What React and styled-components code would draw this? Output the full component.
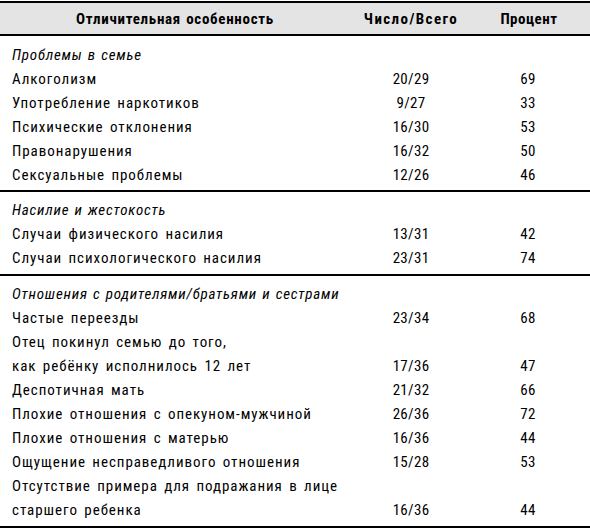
import React from "react";
import styled, { createGlobalStyle } from "styled-components";

const Global = createGlobalStyle`
  html, body { margin: 0; padding: 0; background: #fff; }
  body {
    font-family: Roboto, "Liberation Sans", Arial, sans-serif;
    font-stretch: 80%;
    color: #000;
  }
`;

const Table = styled.div`
  width: 590px;
  margin-top: 1px;
  border-top: 2px solid #000;
  font-size: 15px;
`;

const Header = styled.div`
  display: grid;
  grid-template-columns: 350px 122px 1fr;
  align-items: center;
  height: 31px;
  background: #e4e4e4;
  border-bottom: 2px solid #000;
  font-weight: bold;
`;

const HeadCell = styled.div`
  text-align: center;
  letter-spacing: ${(p) => p.$ls}px;
  word-spacing: 1px;
  padding-right: ${(p) => p.$shift || 0}px;
`;

const Section = styled.div`
  padding: ${(p) => (p.$first ? "7px 0 3px" : "6px 0 4px")};
  border-bottom: 2px solid #000;
`;

const Title = styled.div`
  padding-left: 12px;
  line-height: 24px;
  font-style: italic;
  white-space: nowrap;
  letter-spacing: 0.8px;
  word-spacing: 1px;
`;

const Row = styled.div`
  display: grid;
  grid-template-columns: 350px 122px 1fr;
  align-items: end;
  line-height: 24px;
`;

const Label = styled.div`
  padding-left: 12px;
  white-space: nowrap;
  letter-spacing: 0.95px;
  word-spacing: 2px;
`;

const Num = styled.div`
  text-align: center;
  letter-spacing: 0.3px;
  padding-right: ${(p) => p.$shift || 0}px;
`;

const sections = [
  {
    title: "Проблемы в семье",
    rows: [
      ["Алкоголизм", "20/29", "69"],
      ["Употребление наркотиков", "9/27", "33"],
      ["Психические отклонения", "16/30", "53"],
      ["Правонарушения", "16/32", "50"],
      ["Сексуальные проблемы", "12/26", "46"],
    ],
  },
  {
    title: "Насилие и жестокость",
    rows: [
      ["Случаи физического насилия", "13/31", "42"],
      ["Случаи психологического насилия", "23/31", "74"],
    ],
  },
  {
    title: "Отношения с родителями/братьями и сестрами",
    rows: [
      ["Частые переезды", "23/34", "68"],
      [["Отец покинул семью до того,", "как ребёнку исполнилось 12 лет"], "17/36", "47"],
      ["Деспотичная мать", "21/32", "66"],
      ["Плохие отношения с опекуном-мужчиной", "26/36", "72"],
      ["Плохие отношения с матерью", "16/36", "44"],
      ["Ощущение несправедливого отношения", "15/28", "53"],
      [["Отсутствие примера для подражания в лице", "старшего ребенка"], "16/36", "44"],
    ],
  },
];

export default function App() {
  return (
    <>
      <Global />
      <Table>
        <Header>
          <HeadCell $ls={0.7}>Отличительная особенность</HeadCell>
          <HeadCell $ls={1.4}>Число/Всего</HeadCell>
          <HeadCell $ls={0.5} $shift={4}>Процент</HeadCell>
        </Header>
        {sections.map((s, si) => (
          <Section key={s.title} $first={si === 0}>
            <Title>{s.title}</Title>
            {s.rows.map(([label, n, p], i) => (
              <Row key={i}>
                <Label>
                  {Array.isArray(label) ? (
                    <>
                      {label[0]}
                      <br />
                      {label[1]}
                    </>
                  ) : (
                    label
                  )}
                </Label>
                <Num>{n}</Num>
                <Num $shift={6}>{p}</Num>
              </Row>
            ))}
          </Section>
        ))}
      </Table>
    </>
  );
}
